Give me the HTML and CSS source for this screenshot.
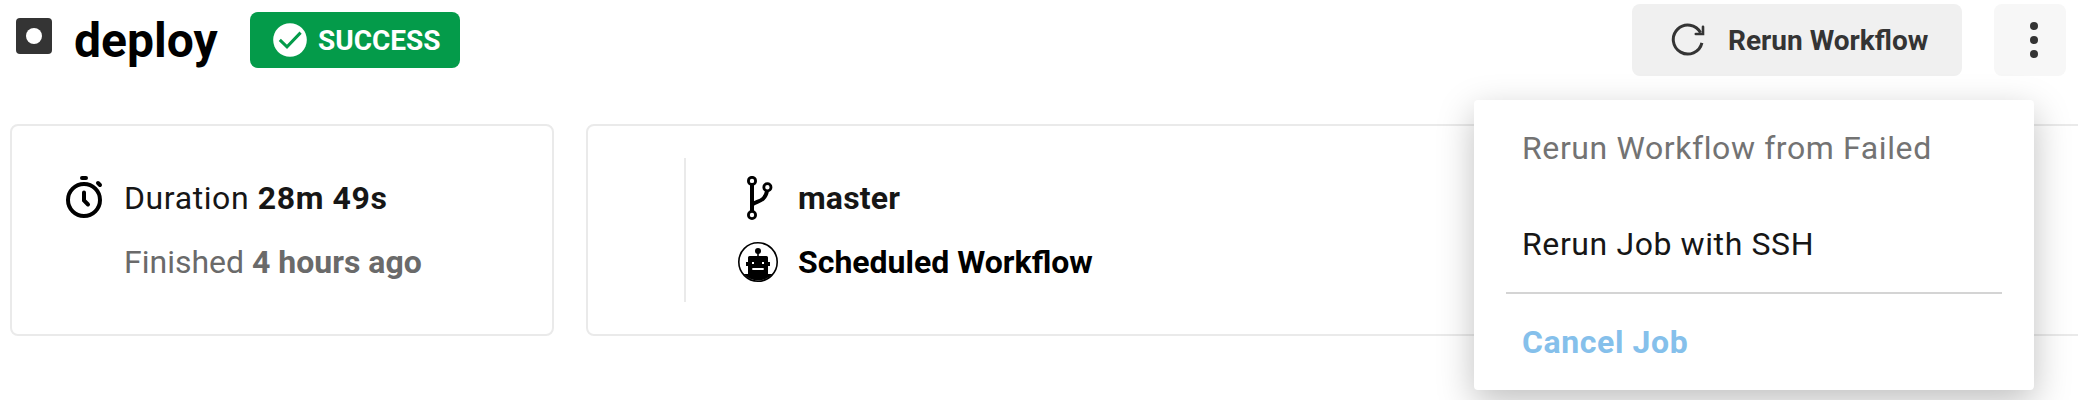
FILE: index.html
```html
<!DOCTYPE html>
<html lang="en">
<head>
<meta charset="utf-8">
<title>deploy</title>
<link rel="stylesheet" href="styles.css">
</head>
<body>
<header class="header">
  <svg class="job-icon" viewBox="0 0 36 36"><rect width="36" height="36" rx="4" fill="#343434"/><circle cx="18" cy="18" r="8" fill="#fff"/></svg>
  <h1 class="title">deploy</h1>
  <div class="badge">
    <svg class="badge-icon" viewBox="0 0 34 34"><circle cx="17" cy="17" r="16.8" fill="#fff"/><path d="M6.8 16.8L14 23.8L27.6 9.6" fill="none" stroke="#049b4a" stroke-width="3"/></svg>
    <span class="badge-text">SUCCESS</span>
  </div>
  <div class="actions">
    <button class="button rerun">
      <svg class="rerun-icon" viewBox="0 0 34 34"><path d="M30.9 19.8A14.5 14.5 0 1 1 29.6 9.7" fill="none" stroke="#343434" stroke-width="3"/><path d="M32 3.8V11H24.8" fill="none" stroke="#343434" stroke-width="2.6" stroke-linecap="round"/></svg>
      <span class="rerun-text">Rerun Workflow</span>
    </button>
    <div class="more-wrap">
      <button class="button more">
        <svg class="more-icon" viewBox="0 0 8 36" fill="#343434"><circle cx="4" cy="4" r="4"/><circle cx="4" cy="18" r="4"/><circle cx="4" cy="32" r="4"/></svg>
      </button>
      <div class="menu">
        <div class="item disabled"><span class="item-text failed">Rerun Workflow from Failed</span></div>
        <div class="item"><span class="item-text ssh">Rerun Job with SSH</span></div>
        <div class="divider"></div>
        <div class="item cancel"><span class="item-text">Cancel Job</span></div>
      </div>
    </div>
  </div>
</header>
<main class="cards">
  <section class="card timing">
    <div class="row">
      <svg class="row-icon" viewBox="0 0 44 44" fill="none" stroke="#000" stroke-width="4" stroke-linecap="round"><circle cx="22" cy="24" r="16"/><path d="M20 2H24M22 16.5V24.5L26 28.5M36 7L38 9"/></svg>
      <span class="row-text duration">Duration <b>28m 49s</b></span>
    </div>
    <div class="row finished"><span class="row-text">Finished <b>4 hours ago</b></span></div>
  </section>
  <section class="card source">
    <div class="source-rows">
      <div class="row">
        <svg class="row-icon" viewBox="0 0 44 44" fill="none" stroke="#000"><g stroke-width="2.8"><circle cx="16" cy="4.9" r="3.6"/><circle cx="31.4" cy="11.2" r="3.6"/><circle cx="16" cy="39" r="3.6"/></g><path d="M16 8V36M16 28.5C22 24.5 29 25.5 31 15" stroke-width="4"/></svg>
        <b class="row-text branch">master</b>
      </div>
      <div class="row">
        <svg class="row-icon" viewBox="0 0 44 44"><circle cx="22" cy="22" r="19.2" fill="none" stroke="#000" stroke-width="1.6"/><path d="M7.5 34H12V17.5Q12 16 13.5 16H30.5Q32 16 32 17.5V34H36.5A19.5 19.5 0 0 1 7.5 34Z"/><circle cx="22" cy="11" r="3"/><path d="M21.2 12h1.6v5h-1.6zM10 22h24v4H10z"/><path d="M16 22h2v2h-2zM26 22h2v2h-2zM16.3 28h11.4v2H16.3z" fill="#fff"/></svg>
        <b class="row-text scheduled">Scheduled Workflow</b>
      </div>
    </div>
  </section>
</main>
</body>
</html>
```
FILE: styles.css
```css
* { box-sizing: border-box; }
body {
  margin: 0;
  width: 2078px;
  height: 400px;
  overflow: hidden;
  background: #fff;
  color: #161616;
  font-family: Roboto, sans-serif;
}
.header {
  display: flex;
  height: 124px;
  padding: 4px 12px 0 16px;
  align-items: flex-start;
}
.job-icon { width: 36px; height: 36px; margin-top: 14px; }
.title {
  width: 146px;
  margin: 8px 0 0 22px;
  color: #000;
  font-size: 48px;
  line-height: 58px;
  font-weight: 700;
  white-space: nowrap;
}
.badge {
  display: flex;
  align-items: center;
  gap: 11px;
  width: 210px;
  height: 56px;
  margin: 8px 0 0 30px;
  padding-left: 23px;
  border-radius: 8px;
  background: #049b4a;
  color: #fff;
  font-size: 28px;
  font-weight: 700;
}
.badge-icon { width: 34px; height: 34px; }
.actions { display: flex; gap: 32px; margin-left: auto; }
.button {
  display: flex;
  align-items: center;
  height: 72px;
  padding: 0;
  border: 0;
  border-radius: 8px;
  font: 700 28px Roboto, sans-serif;
  color: #343434;
}
.rerun { width: 330px; padding-left: 39px; gap: 23px; background: #f0f0f0; white-space: nowrap; }
.rerun-icon { width: 34px; height: 34px; }
.more-wrap { position: relative; }
.more { width: 72px; padding-left: 36px; background: #f7f7f7; }
.more-icon { width: 8px; height: 36px; }
.menu {
  position: absolute;
  top: 96px;
  right: 32px;
  width: 560px;
  border-radius: 4px;
  background: #fff;
  box-shadow: 0 12px 36px rgba(0, 0, 0, .25);
}
.item {
  display: flex;
  align-items: center;
  height: 96px;
  padding-left: 48px;
  font-size: 32px;
  letter-spacing: .6px;
  white-space: nowrap;
}
.disabled { color: #737373; }
.cancel { color: #85c0eb; font-weight: 700; }
.divider { height: 2px; margin: 0 32px; background: #d4d4d4; }
.cards { display: flex; gap: 32px; padding-left: 10px; }
.card {
  flex: none;
  height: 212px;
  padding: 32px 0;
  border: 2px solid #eaeaea;
  border-radius: 8px;
}
.timing { width: 544px; padding: 40px 0 0 50px; }
.source { width: 1540px; padding-left: 96px; }
.source-rows { height: 144px; padding: 8px 0 0 50px; border-left: 2px solid #eaeaea; }
.row { display: flex; align-items: center; gap: 18px; height: 64px; font-size: 32px; white-space: nowrap; }
.row-icon { width: 44px; height: 44px; }
.duration { letter-spacing: .6px; }
.branch { letter-spacing: .15px; }
.finished { padding-left: 62px; color: #6a6a6a; }
.scheduled { color: #000; }
```
